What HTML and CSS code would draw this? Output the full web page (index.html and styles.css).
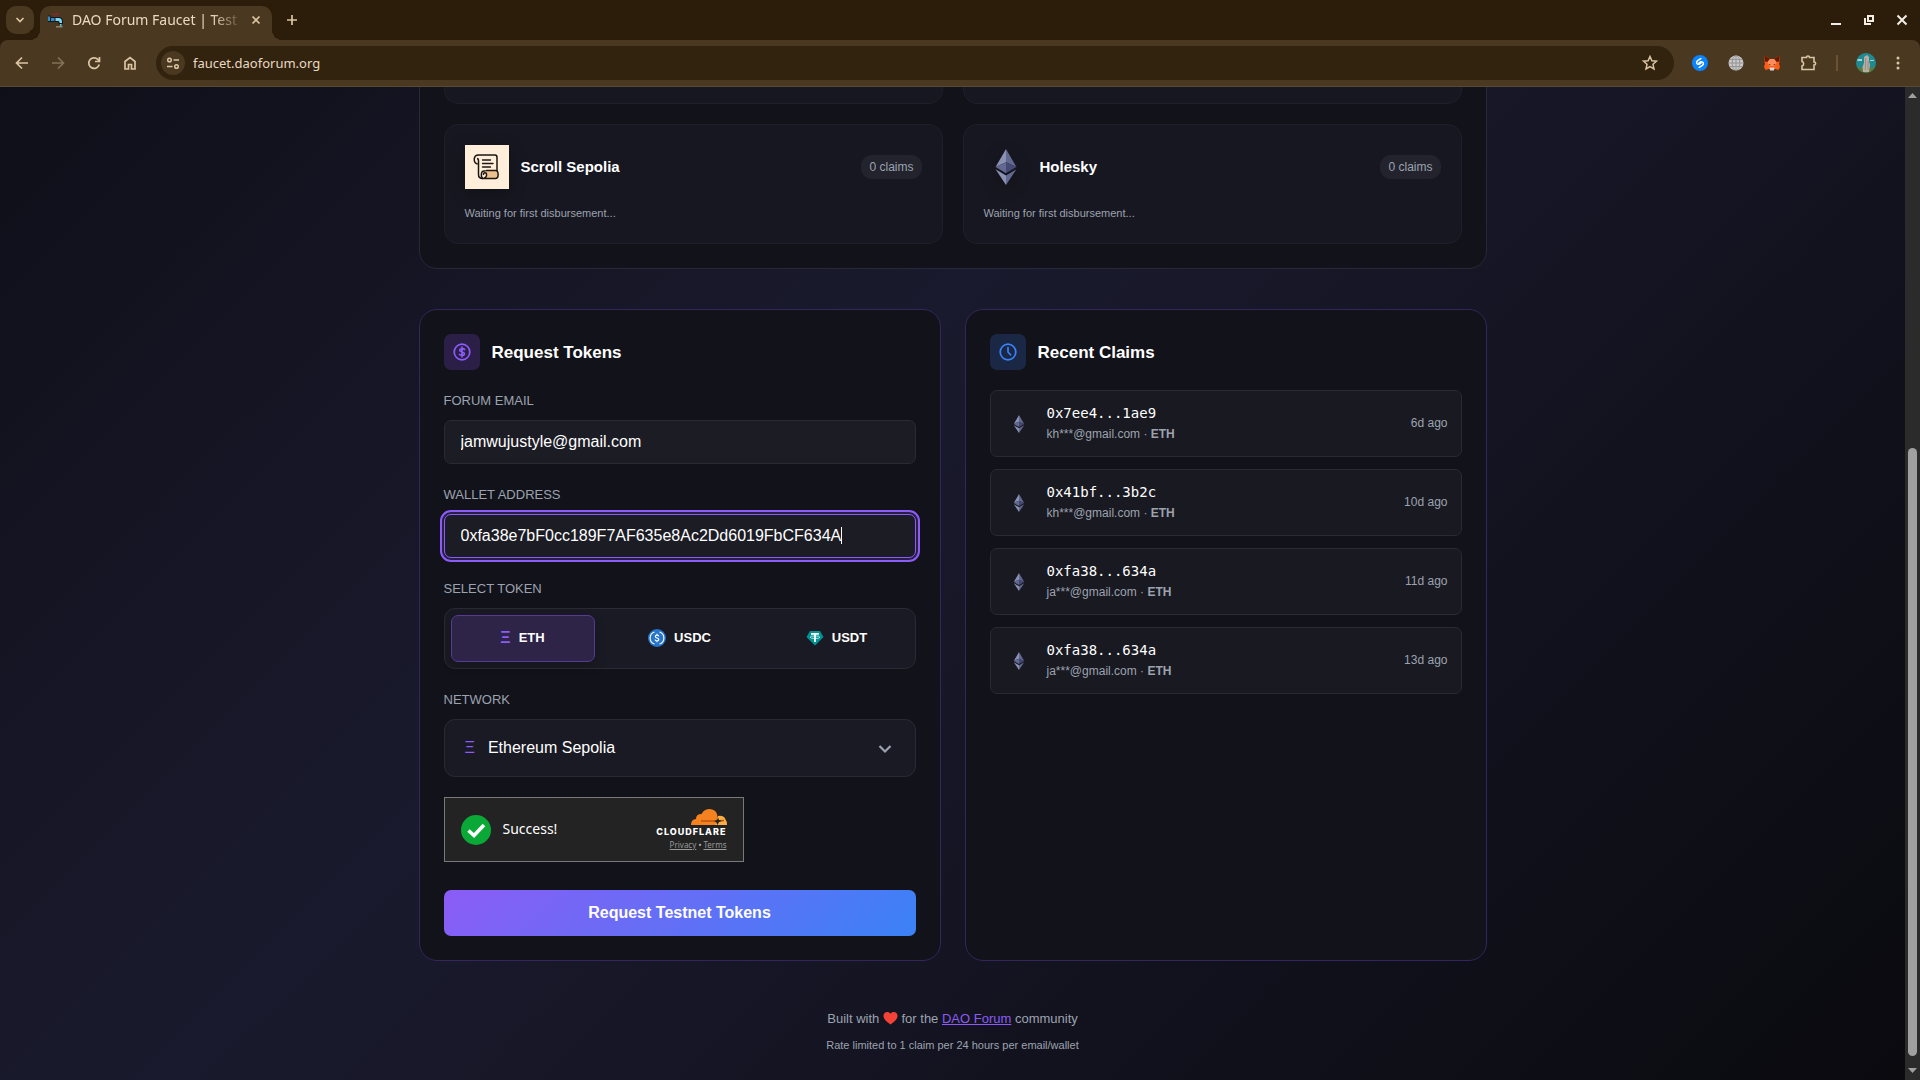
FILE: index.html
```html
<!DOCTYPE html>
<html lang="en">

<head>
    <meta charset="UTF-8">
    <meta name="viewport" content="width=device-width, initial-scale=1.0">
    <title>DAO Forum Faucet | Testnet Tokens</title>
    <link rel="stylesheet" href="styles.css">
</head>

<body>
    <!-- shared icons -->
    <svg class="sprite" aria-hidden="true">
        <symbol id="eth" viewBox="0 0 22 38">
            <path fill="#8a92b2" d="M11 0 0 19l11-5z" />
            <path fill="#62688f" d="M11 0v14l11 5z" />
            <path fill="#62688f" d="M0 19l11-5v11.500z" />
            <path fill="#454a75" d="M11 14l11 5-11 6.500z" />
            <path fill="#8a92b2" d="M0 21.500 11 38V28z" />
            <path fill="#62688f" d="M11 28v10l11-16.500z" />
        </symbol>
    </svg>

    <header class="browser">
        <div class="tabstrip">
            <button class="tab-search" aria-label="Search tabs">
                <svg width="10" height="10" viewBox="0 0 10 10"><path d="M1.500 3 5 6.500 8.500 3" /></svg>
            </button>
            <div class="tab">
                <svg class="favicon" width="16" height="16" viewBox="0 0 16 16">
                    <path fill="#6e2f28" d="M4 1h7v2H9v2H6V3H4z" />
                    <path fill="#14181c" d="M0 3.500h2.500V5H10c3.500 0 5 1.500 5 5v2h-4.500v-2H0z" />
                    <path fill="#2f8fc4" d="M0 4.500h2v4.500H0zM3 6h3.500v3H3z" />
                    <path fill="#7fd6f2" d="M7.500 6h3c2.500 0 3.500 1.500 3.500 4v1h-2.500c0-1.500-.5-2-1.500-2H7.500z" />
                    <path fill="#5cc3e8" d="M12 12h1.500v2H12z" />
                    <path fill="#8d8678" d="M8 14h6.500v1.500H8z" />
                </svg>
                <span class="tab-title">DAO Forum Faucet | Test</span>
                <button class="tab-close" aria-label="Close tab">
                    <svg width="10" height="10" viewBox="0 0 10 10"><path d="M1.500 1.500l7 7M8.500 1.500l-7 7" /></svg>
                </button>
            </div>
            <button class="tab-new" aria-label="New tab">
                <svg width="12" height="12" viewBox="0 0 12 12"><path d="M6 1v10M1 6h10" /></svg>
            </button>
            <div class="window-buttons">
                <button aria-label="Minimize"><svg width="12" height="12" viewBox="0 0 12 12"><path d="M1 10h10" /></svg></button>
                <button aria-label="Restore"><svg width="12" height="12" viewBox="0 0 12 12"><path d="M5 2h5v5H5zM2 4v6h6" /></svg></button>
                <button aria-label="Close"><svg width="12" height="12" viewBox="0 0 12 12"><path d="M1.500 1.500l9 9M10.500 1.500l-9 9" /></svg></button>
            </div>
        </div>
        <div class="toolbar">
            <div class="nav">
                <button aria-label="Back"><svg width="16" height="16" viewBox="0 0 16 16"><path d="M14 8H3M8 2.500 2.500 8 8 13.500" /></svg></button>
                <button class="off" aria-label="Forward"><svg width="16" height="16" viewBox="0 0 16 16"><path d="M2 8h11M8 2.500 13.500 8 8 13.500" /></svg></button>
                <button aria-label="Reload"><svg width="16" height="16" viewBox="0 0 16 16"><path d="M13.200 9.500A5.300 5.300 0 1 1 11.800 4.300L13.500 6M13.500 2v4.500H9" /></svg></button>
                <button aria-label="Home"><svg width="16" height="16" viewBox="0 0 16 16"><path d="M3 14V6.500l5-4 5 4V14h-3.500V9.500h-3V14z" /></svg></button>
            </div>
            <div class="omnibox">
                <button class="site-info" aria-label="Site information">
                    <svg width="14" height="14" viewBox="0 0 14 14"><circle cx="3.500" cy="4" r="1.800" /><path d="M7.500 4H13M1 10.500h5.500" /><circle cx="10.500" cy="10.500" r="1.800" /></svg>
                </button>
                <input class="url" type="text" aria-label="Address" value="faucet.daoforum.org">
                <button class="star" aria-label="Bookmark">
                    <svg width="16" height="16" viewBox="0 0 16 16"><path d="M8 1.500l1.900 4.300 4.600.4-3.500 3.100 1 4.600L8 11.500l-4 2.400 1-4.600-3.500-3.100 4.600-.4z" /></svg>
                </button>
            </div>
            <div class="extensions">
                <button aria-label="Shazam">
                    <svg width="16" height="16" viewBox="0 0 16 16"><circle cx="8" cy="8" r="8" fill="#0a84ff" /><path fill="none" stroke="#fff" stroke-width="1.500" stroke-linecap="round" d="M8.800 3.600 5.600 5.600C3.500 7.200 5 9.800 7 9.200l2-1.200M7.200 12.400l3.200-2C12.500 8.800 11 6.200 9 6.800l-2 1.200" /></svg>
                </button>
                <button aria-label="Web">
                    <svg width="16" height="16" viewBox="0 0 16 16"><circle cx="8" cy="8" r="7.500" fill="#c8c8c8" /><g fill="none" stroke="#8a8a8a" stroke-width=".8"><path d="M8 1v14M1 8h14M2 4.500h12M2 11.500h12" /><ellipse cx="8" cy="8" rx="3.800" ry="7.500" /></g></svg>
                </button>
                <button aria-label="MetaMask">
                    <svg width="16" height="16" viewBox="0 0 16 16"><path fill="#ff5c16" d="M.5.500 6 4h4l5.500-3.500v6L15 9l1 3-1.500 3-3.500-1H5l-3.500 1L0 12l1-3-.5-2.500z" /><path fill="#661800" d="M.5.500 6 4 3.500 7 .8 6.500zM15.500.500 10 4l2.500 3 2.700-.5z" /><path fill="#ff8d5d" d="M3.500 7 6 4h4l2.500 3L11 11H5z" /><path fill="#d9d4d0" d="M5.500 12.500h5L10 15.500H6z" /><path fill="#33190a" d="M4.500 9 6.500 9.500l-.5 1zM11.500 9 9.500 9.500l.5 1z" /></svg>
                </button>
                <button aria-label="Extensions">
                    <svg class="line" width="18" height="18" viewBox="0 0 18 18"><path d="M2 3.500h4.500c0-2 3-2 3 0H14V8c2.200 0 2.200 3 0 3v4.500H2V12c2.200-.5 2.200-4 0-4.500z" /></svg>
                </button>
                <span class="separator"></span>
                <button aria-label="Profile">
                    <svg width="20" height="20" viewBox="0 0 20 20"><circle cx="10" cy="10" r="10" fill="#1e8a92" /><path fill="#5e7a35" d="M1 14l5 1h9l4-1a10 10 0 0 1-18 0z" /><path fill="#a7d3d2" d="M2 6h4v2H1zM14 7h4v1h-4z" /><path fill="#b9aca0" d="M8 4l3-2 2 2v4l1 4-1 7H7l-.5-5L8 10z" /><path fill="#8d8076" d="M9.500 5h.7l-.7 12h-.7zM11.700 8h.7v9h-.7z" /></svg>
                </button>
                <button aria-label="Menu">
                    <svg width="4" height="16" viewBox="0 0 4 16"><g fill="#dcc5a4"><circle cx="2" cy="3" r="1.500" /><circle cx="2" cy="8" r="1.500" /><circle cx="2" cy="13" r="1.500" /></g></svg>
                </button>
            </div>
        </div>
    </header>

    <div class="viewport">
        <div class="page">
            <main class="container">
                <!-- network stats -->
                <section class="panel stats">
                    <div class="stat-card"></div>
                    <div class="stat-card"></div>
                    <article class="stat-card">
                        <div class="stat-head">
                            <svg class="stat-icon" viewBox="0 0 44 44">
                                <rect width="44" height="44" fill="#ffeeda" />
                                <path fill="#ffeeda" stroke="#1c1612" stroke-width="1.500" stroke-linejoin="round" d="M12.500 19c-4.500-1-4.500-9 1-9H30q2 0 2 2.500V26H19c-3 0-3.500 5-1.500 7.500-2.500 0-4-1.500-4-4V16q0-2.500-1.500-2.500" />
                                <path fill="#ebc28e" stroke="#1c1612" stroke-width="1.500" stroke-linejoin="round" d="M21 25.500h9.500c3.500 0 3.500 8 0 8H17.500c3 0 4.500-2.500 4-4.500-.5-2-3.500-1.500-3 1" />
                                <path fill="none" stroke="#1c1612" stroke-width="1.400" stroke-linecap="round" d="M17.500 15h8M17.500 18.500H28M17.500 22h8" />
                            </svg>
                            <h3 class="stat-name">Scroll Sepolia</h3>
                            <span class="badge">0 claims</span>
                        </div>
                        <p class="stat-note">Waiting for first disbursement...</p>
                    </article>
                    <article class="stat-card">
                        <div class="stat-head">
                            <svg class="stat-icon eth-large"><use href="#eth" /></svg>
                            <h3 class="stat-name">Holesky</h3>
                            <span class="badge">0 claims</span>
                        </div>
                        <p class="stat-note">Waiting for first disbursement...</p>
                    </article>
                </section>

                <div class="columns">
                    <!-- request form -->
                    <section class="panel accent">
                        <div class="panel-head">
                            <span class="panel-icon purple">
                                <svg width="18" height="18" viewBox="0 0 18 18"><circle cx="9" cy="9" r="7.800" /><path d="M11.500 6.500C11 5.500 6.700 5.200 6.700 7.300c0 2 4.700 1.300 4.700 3.400 0 2-4.200 1.800-4.900.7M9 4.200v9.600" /></svg>
                            </span>
                            <h2>Request Tokens</h2>
                        </div>
                        <form class="form">
                            <label class="label" for="email">Forum Email</label>
                            <input class="field" id="email" type="text" value="jamwujustyle@gmail.com">

                            <label class="label" for="wallet">Wallet Address</label>
                            <div class="field-wrap">
                                <input class="field focused" id="wallet" type="text" value="0xfa38e7bF0cc189F7AF635e8Ac2Dd6019FbCF634A">
                                <span class="caret"></span>
                            </div>

                            <span class="label" id="token-label">Select Token</span>
                            <div class="tokens" role="group" aria-labelledby="token-label">
                                <button class="token active" type="button" aria-pressed="true"><span class="xi">Ξ</span>ETH</button>
                                <button class="token" type="button" aria-pressed="false">
                                    <svg width="18" height="18" viewBox="0 0 18 18"><circle cx="9" cy="9" r="9" fill="#2775ca" /><path fill="none" stroke="#fff" stroke-width="1.100" d="M6.500 3a6.300 6.300 0 0 0 0 12M11.500 3a6.300 6.300 0 0 1 0 12M10.800 7.400C10.600 5.700 7.300 5.700 7.300 7.400c0 2 3.500 1.200 3.500 3.100 0 1.900-3.600 1.800-3.700 0M9 4.800V6M9 12v1.200" /></svg>
                                    USDC
                                </button>
                                <button class="token" type="button" aria-pressed="false">
                                    <svg width="18" height="18" viewBox="0 0 18 18"><path fill="#009393" d="M4 2h10l3.500 6L9 16.500.5 8z" /><path fill="#fff" d="M5 4h8v1.800h-3.100V13H8.100V5.800H5z" /><ellipse cx="9" cy="8.200" rx="4.800" ry="1.300" fill="none" stroke="#fff" stroke-width=".7" /></svg>
                                    USDT
                                </button>
                            </div>

                            <label class="label" for="network">Network</label>
                            <div class="select">
                                <span class="xi">Ξ</span>
                                <select id="network">
                                    <option>Ethereum Sepolia</option>
                                    <option>Scroll Sepolia</option>
                                    <option>Holesky</option>
                                </select>
                                <svg width="18" height="18" viewBox="0 0 18 18"><path d="M3.500 7 9 12.500 14.500 7" /></svg>
                            </div>

                            <div class="turnstile">
                                <svg class="tick" width="30" height="30" viewBox="0 0 30 30"><circle cx="15" cy="15" r="15" fill="#0aa937" /><path fill="none" stroke="#fff" stroke-width="3.600" d="M7.500 15.500l5.500 5L23 10" /></svg>
                                <span class="success">Success!</span>
                                <div class="brand">
                                    <svg width="36" height="16" viewBox="0 0 36 16">
                                        <path fill="#fbad41" d="M27 7q6-1 7.500 3.500Q36 12 36 16H23z" />
                                        <path fill="#f6821f" d="M0 16q0-5.500 5-6 0-5 5.500-5Q13 0 19 0q6.500.500 7.500 7l-2 9z" />
                                        <path fill="none" stroke="#b8560c" stroke-width="1.400" d="M10 12h15l8-.5" />
                                        <path fill="#222" d="M27 8.500l1 2.500 3 1-3 1-1.500 3-1.500-3-2-1 3-1z" />
                                    </svg>
                                    <span class="wordmark">CLOUDFLARE</span>
                                    <span class="legal"><a href="#">Privacy</a> • <a href="#">Terms</a></span>
                                </div>
                            </div>

                            <button class="submit" type="submit">Request Testnet Tokens</button>
                        </form>
                    </section>

                    <!-- latest claims -->
                    <section class="panel accent">
                        <div class="panel-head">
                            <span class="panel-icon blue">
                                <svg width="18" height="18" viewBox="0 0 18 18"><circle cx="9" cy="9" r="7.800" /><path d="M9 4.500V9l2.500 2.800" /></svg>
                            </span>
                            <h2>Recent Claims</h2>
                        </div>
                        <ul class="claims">
                            <li class="claim">
                                <svg class="eth-small"><use href="#eth" /></svg>
                                <div class="claim-info">
                                    <span class="address">0x7ee4...1ae9</span>
                                    <span class="meta">kh***@gmail.com · <strong>ETH</strong></span>
                                </div>
                                <time class="ago">6d ago</time>
                            </li>
                            <li class="claim">
                                <svg class="eth-small"><use href="#eth" /></svg>
                                <div class="claim-info">
                                    <span class="address">0x41bf...3b2c</span>
                                    <span class="meta">kh***@gmail.com · <strong>ETH</strong></span>
                                </div>
                                <time class="ago">10d ago</time>
                            </li>
                            <li class="claim">
                                <svg class="eth-small"><use href="#eth" /></svg>
                                <div class="claim-info">
                                    <span class="address">0xfa38...634a</span>
                                    <span class="meta">ja***@gmail.com · <strong>ETH</strong></span>
                                </div>
                                <time class="ago">11d ago</time>
                            </li>
                            <li class="claim">
                                <svg class="eth-small"><use href="#eth" /></svg>
                                <div class="claim-info">
                                    <span class="address">0xfa38...634a</span>
                                    <span class="meta">ja***@gmail.com · <strong>ETH</strong></span>
                                </div>
                                <time class="ago">13d ago</time>
                            </li>
                        </ul>
                    </section>
                </div>

                <footer class="footer">
                    <p>Built with
                        <svg class="heart" width="15" height="14" viewBox="0 0 16 14"><path fill="#f44336" d="M8 14C3 10.500.5 8 .5 4.500.5 1 5.500-1 8 2.500 10.500-1 15.500 1 15.500 4.500 15.500 8 13 10.500 8 14z" /></svg>
                        for the <a href="#">DAO Forum</a> community</p>
                    <p class="limit">Rate limited to 1 claim per 24 hours per email/wallet</p>
                </footer>
            </main>
        </div>
        <div class="scrollbar">
            <svg width="9" height="5" viewBox="0 0 9 5"><path fill="#a0a0a0" d="M0 5l4.500-5L9 5z" /></svg>
            <div class="thumb"></div>
            <svg width="9" height="5" viewBox="0 0 9 5"><path fill="#a0a0a0" d="M0 0l4.500 5L9 0z" /></svg>
        </div>
    </div>
</body>

</html>
```
FILE: styles.css
```css
* {
    box-sizing: border-box;
}

body {
    margin: 0;
    height: 100vh;
    display: flex;
    flex-direction: column;
    overflow: hidden;
    background: #0a0a0f;
    color: #fff;
    font-family: "Liberation Sans", Arial, sans-serif;
    font-size: 16px;
}

button,
input,
select {
    margin: 0;
    padding: 0;
    border: 0;
    background: none;
    color: inherit;
    font-family: inherit;
}

h2,
h3,
p,
ul {
    margin: 0;
    padding: 0;
}

svg {
    display: block;
    flex-shrink: 0;
}

.sprite {
    position: absolute;
    width: 0;
    height: 0;
}

/* browser window */
.browser {
    flex-shrink: 0;
    background: #2b1d0a;
    border-bottom: 1px solid #5a4833;
    font-family: "Noto Sans", sans-serif;
    color: #e9d9c2;
}

.browser svg {
    fill: none;
    stroke: #dcc5a4;
    stroke-width: 1.7;
}

.tabstrip {
    display: flex;
    align-items: center;
    height: 40px;
    padding: 0 6px;
}

.tab-search {
    display: flex;
    align-items: center;
    justify-content: center;
    width: 28px;
    height: 28px;
    border-radius: 10px;
    background: #4a3820;
}

.tab {
    position: relative;
    display: flex;
    align-items: center;
    align-self: flex-end;
    width: 232px;
    height: 34px;
    margin-left: 6px;
    padding: 0 11px 6px 8px;
    border-radius: 10px 10px 0 0;
    background: #4a3820;
}

/* curved feet of the active tab */
.tab::before,
.tab::after {
    content: "";
    position: absolute;
    bottom: 0;
    width: 10px;
    height: 10px;
}

.tab::before {
    right: 100%;
    background: radial-gradient(circle at 0 0, #2b1d0a 10px, #4a3820 10px);
}

.tab::after {
    left: 100%;
    background: radial-gradient(circle at 100% 0, #2b1d0a 10px, #4a3820 10px);
}

.browser .favicon,
.extensions button svg {
    stroke: none;
}

.tab-title {
    flex: 1;
    margin: 0 4px 0 8px;
    white-space: nowrap;
    font-size: 14px;
    line-height: 20px;
    mask-image: linear-gradient(90deg, #000 80%, transparent 98%);
}

.tab-new {
    margin-left: 14px;
}

.window-buttons {
    display: flex;
    gap: 21px;
    margin-left: auto;
    padding-right: 6px;
}

.browser .window-buttons svg {
    stroke: #f3eee6;
    stroke-width: 2;
}

.toolbar {
    display: flex;
    align-items: center;
    height: 46px;
    padding: 0 20px 0 14px;
    border-radius: 8px 8px 0 0;
    background: #4a3820;
}

.nav {
    display: flex;
    gap: 20px;
}

.nav .off {
    opacity: 0.4;
}

.omnibox {
    display: flex;
    align-items: center;
    flex: 1;
    height: 34px;
    margin-left: 18px;
    padding: 0 16px 0 5px;
    border-radius: 17px;
    background: #32230e;
}

.site-info {
    display: flex;
    align-items: center;
    justify-content: center;
    width: 24px;
    height: 24px;
    border-radius: 50%;
    background: #4a3820;
}

.browser .site-info svg,
.browser .star svg {
    stroke-width: 1.5;
}

.url {
    flex: 1;
    margin-left: 8px;
    font-size: 13px;
    line-height: 20px;
}

.extensions {
    display: flex;
    align-items: center;
    gap: 20px;
    margin-left: 18px;
}

.browser .extensions .line {
    stroke: #dcc5a4;
    stroke-width: 1.6;
}

.separator {
    width: 2px;
    height: 16px;
    margin: 0 -2px;
    background: #6b5236;
}

/* scroll area */
.viewport {
    flex: 1;
    display: flex;
    min-height: 0;
}

.page {
    flex: 1;
    display: flex;
    flex-direction: column;
    align-items: center;
    justify-content: flex-end;
    overflow: hidden;
    background: linear-gradient(135deg, #0a0a0f 0%, #1a1a2e 50%, #0a0a0f 100%) bottom / 100% 1576px no-repeat;
}

.scrollbar {
    display: flex;
    flex-direction: column;
    align-items: center;
    width: 15px;
    padding: 6px 0 7px;
    background: #2b2b2b;
}

.thumb {
    width: 9px;
    height: 62%;
    margin: auto 0 12px;
    border-radius: 5px;
    background: #a0a0a0;
}

.container {
    width: 100%;
    max-width: 1068px;
}

/* panels */
.panel {
    padding: 24px;
    border: 1px solid #2a2838;
    border-radius: 18px;
    background: #12121a;
}

.panel.accent {
    border-color: #34265c;
}

.stats {
    display: grid;
    grid-template-columns: 1fr 1fr;
    gap: 20px;
}

.stat-card {
    min-height: 120px;
    padding: 20px;
    border: 1px solid #1f1f2a;
    border-radius: 14px;
    background: #171721;
}

.stat-head {
    display: flex;
    align-items: center;
    gap: 12px;
}

.stat-icon {
    width: 44px;
    height: 44px;
    filter: drop-shadow(0 4px 8px rgba(0, 0, 0, 0.3));
}

.stat-icon.eth-large {
    padding: 4px 0;
}

.stat-name {
    flex: 1;
    padding-bottom: 2px;
    font-size: 15px;
}

.badge {
    padding: 0 8px;
    border-radius: 11px;
    background: #23232d;
    color: #9ca3af;
    font-size: 12px;
    line-height: 24px;
}

.stat-note {
    margin-top: 16px;
    color: #9ca3af;
    font-size: 11px;
    line-height: 16px;
}

.columns {
    display: grid;
    grid-template-columns: 1fr 1fr;
    gap: 24px;
    margin-top: 40px;
}

.panel-head {
    display: flex;
    align-items: center;
    gap: 12px;
}

.panel-head h2 {
    padding-top: 1px;
    font-size: 17px;
}

.panel-icon {
    display: flex;
    align-items: center;
    justify-content: center;
    width: 36px;
    height: 36px;
    border-radius: 7px;
}

.panel-icon svg {
    fill: none;
    stroke-width: 1.7;
    stroke-linecap: round;
}

.purple {
    background: #2b1f47;
    stroke: #8b5cf6;
}

.blue {
    background: #1a2846;
    stroke: #3b82f6;
}

/* form */
.form {
    display: flex;
    flex-direction: column;
}

.label {
    margin: 22px 0 10px;
    color: #9ca3af;
    font-size: 13px;
    line-height: 18px;
    text-transform: uppercase;
}

.field {
    display: block;
    width: 100%;
    height: 44px;
    padding: 0 16px;
    border: 1px solid #2a2a36;
    border-radius: 7px;
    background: #1c1c25;
    font-size: 16px;
}

.field-wrap {
    position: relative;
}

.focused {
    border-color: #8b5cf6;
    outline: 2px solid #8b5cf6;
    outline-offset: 2px;
    box-shadow: 0 0 0 3px #281e48;
}

.caret {
    position: absolute;
    top: 13px;
    left: 397px;
    width: 1px;
    height: 17px;
    background: #fff;
}

.tokens {
    display: grid;
    grid-template-columns: repeat(3, 1fr);
    gap: 13px;
    padding: 6px;
    border: 1px solid #2a2a36;
    border-radius: 11px;
    background: #1a1a24;
}

.token {
    display: flex;
    align-items: center;
    justify-content: center;
    gap: 8px;
    height: 47px;
    padding-bottom: 2px;
    border: 1px solid transparent;
    border-radius: 7px;
    font-size: 13px;
    font-weight: bold;
}

.token.active {
    border-color: #553b93;
    background: #2d2447;
    box-shadow: 0 4px 12px rgba(0, 0, 0, 0.2);
}

.xi {
    color: #8b5cf6;
    font-size: 16px;
}

.select {
    display: flex;
    align-items: center;
    height: 58px;
    padding: 0 21px 0 20px;
    border: 1px solid #2a2a36;
    border-radius: 11px;
    background: #1a1a24;
}

.select select {
    flex: 1;
    height: 100%;
    margin-left: 13px;
    padding-bottom: 2px;
    appearance: none;
    font-size: 16px;
}

.select svg {
    fill: none;
    stroke: #9ca3af;
    stroke-width: 2.2;
}

.turnstile {
    display: flex;
    align-items: center;
    width: 300px;
    height: 65px;
    margin-top: 20px;
    padding: 0 16px;
    border: 1px solid #797979;
    background: #232323;
    font-family: "Noto Sans", sans-serif;
}

.success {
    margin-left: 12px;
    padding-bottom: 2px;
    font-size: 14px;
}

.brand {
    display: flex;
    flex-direction: column;
    align-items: flex-end;
    margin-left: auto;
}

.wordmark {
    margin-top: 1px;
    font-family: Inter, sans-serif;
    font-size: 9px;
    font-weight: 800;
    letter-spacing: 1px;
    line-height: 11px;
}

.legal {
    margin-top: 2px;
    color: #bbb;
    font-size: 8px;
    line-height: 12px;
}

.legal a {
    color: #999;
}

.submit {
    height: 46px;
    margin-top: 28px;
    border-radius: 7px;
    background: linear-gradient(135deg, #8b5cf6, #3b82f6);
    font-size: 16px;
    font-weight: bold;
}

/* recent claims */
.claims {
    display: flex;
    flex-direction: column;
    gap: 12px;
    margin-top: 20px;
    list-style: none;
}

.claim {
    display: flex;
    align-items: center;
    height: 67px;
    padding: 0 13px;
    border: 1px solid #2a2a36;
    border-radius: 7px;
    background: #191921;
}

.eth-small {
    width: 30px;
    height: 18px;
}

.claim-info {
    display: flex;
    flex: 1;
    flex-direction: column;
    margin-left: 13px;
    padding-bottom: 2px;
}

.address {
    font-family: "DejaVu Sans Mono", monospace;
    font-size: 14px;
    line-height: 22px;
}

.meta,
.ago {
    color: #9ca3af;
    font-size: 12px;
    line-height: 20px;
}

.ago {
    padding-bottom: 2px;
}

.footer {
    padding: 48px 0 25px;
    color: #9ca3af;
    font-size: 13px;
    line-height: 20px;
    text-align: center;
}

.footer a {
    color: #8b5cf6;
}

.heart {
    display: inline-block;
    vertical-align: -2px;
}

.limit {
    margin-top: 6px;
    font-size: 11px;
}
```
